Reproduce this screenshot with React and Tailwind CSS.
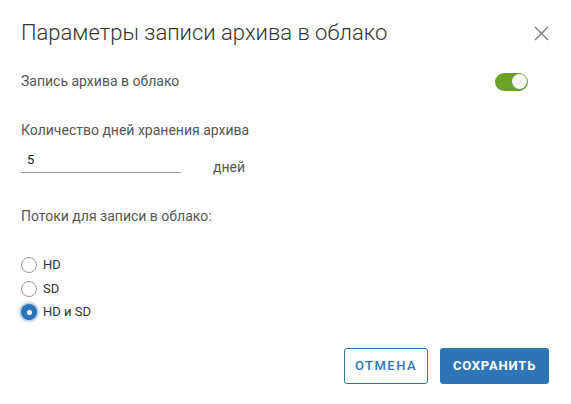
import { useState } from "react";

const streams = ["HD", "SD", "HD и SD"];

const CloudArchiveDialog = () => {
  const [enabled, setEnabled] = useState(true);
  const [days, setDays] = useState("5");
  const [stream, setStream] = useState("HD и SD");

  return (
    <div className="w-[571px] h-[404px] bg-white font-['Roboto',sans-serif] text-[#555] relative">
      {/* Header */}
      <div className="flex items-start justify-between pl-[21px] pr-[22px] pt-[18px]">
        <h2 className="text-[22px] leading-[30px] font-light text-[#333]">
          Параметры записи архива в облако
        </h2>
        <button className="mt-[8px] text-[#777]">
          <svg width="15" height="15" viewBox="0 0 15 15" fill="none" stroke="currentColor" strokeWidth="1.3">
            <path d="M1 1L14 14M14 1L1 14" />
          </svg>
        </button>
      </div>

      {/* Toggle row */}
      <div className="flex items-center justify-between pl-[21px] pr-[43px] mt-[23px]">
        <span className="text-[14px]">Запись архива в облако</span>
        <button
          onClick={() => setEnabled(!enabled)}
          className={`w-[33px] h-[18px] rounded-full flex items-center px-[1.5px] ${
            enabled ? "bg-[#6aa12a] justify-end" : "bg-[#bbb] justify-start"
          }`}
        >
          <span className="w-[15px] h-[15px] rounded-full bg-[#f7f7f7]" />
        </button>
      </div>

      {/* Days */}
      <div className="pl-[21px] mt-[28px]">
        <div className="text-[14px]">Количество дней хранения архива</div>
        <div className="flex items-end mt-[8px]">
          <input
            value={days}
            onChange={(e) => setDays(e.target.value)}
            className="w-[160px] h-[24px] border-b border-[#999] outline-none text-[13px] text-[#222] pl-[6px] pb-[3px]"
          />
          <span className="ml-[32px] text-[14px] mb-[-5px]">дней</span>
        </div>
      </div>

      {/* Streams */}
      <div className="pl-[21px] mt-[33px]">
        <div className="text-[14px]">Потоки для записи в облако:</div>
        <div className="flex flex-col gap-[7.5px] mt-[30px]">
          {streams.map((s) => (
            <label key={s} className="flex items-center gap-[6px] cursor-pointer" onClick={() => setStream(s)}>
              {stream === s ? (
                <span className="w-[16px] h-[16px] rounded-full bg-[#2a74b8] flex items-center justify-center shadow-[0_0_2px_2px_rgba(42,116,184,0.35)]">
                  <span className="w-[5px] h-[5px] rounded-full bg-white" />
                </span>
              ) : (
                <span className="w-[16px] h-[16px] rounded-full border border-[#999] bg-white" />
              )}
              <span className="text-[13px] text-[#333] leading-[16px]">{s}</span>
            </label>
          ))}
        </div>
      </div>

      {/* Footer */}
      <div className="absolute right-[22px] bottom-[20px] flex gap-[12px]">
        <button className="w-[84px] h-[36px] rounded-[3px] border border-[#2e75b6] text-[#2e75b6] text-[13px] font-medium tracking-[1.5px]">
          ОТМЕНА
        </button>
        <button className="w-[109px] h-[36px] rounded-[3px] bg-[#2e75b6] text-white text-[13px] font-bold tracking-[0.8px]">
          СОХРАНИТЬ
        </button>
      </div>
    </div>
  );
};

export default CloudArchiveDialog;
